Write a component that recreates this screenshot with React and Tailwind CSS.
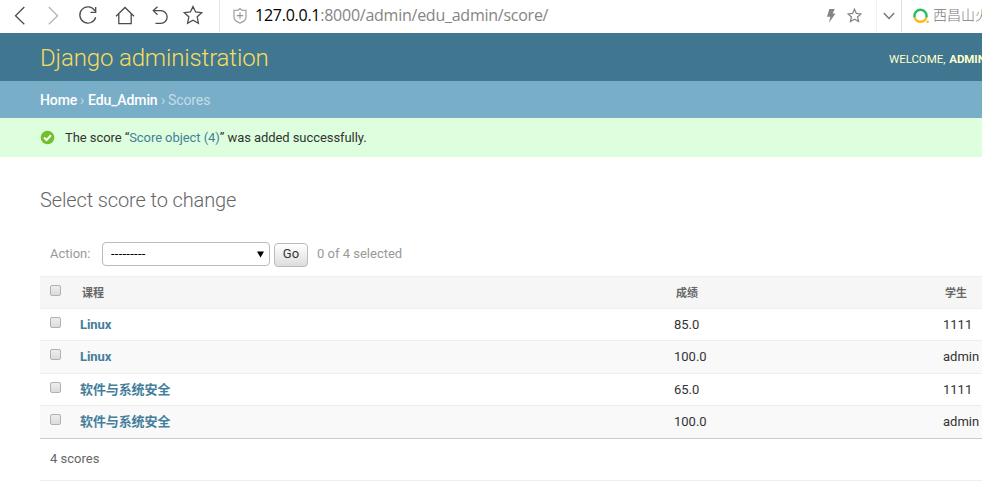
const rows = [
  { course: "Linux", score: "85.0", student: "1111", style: "h-[31px] bg-white" },
  { course: "Linux", score: "100.0", student: "admin", style: "h-[33px] bg-[#f9f9f9] border-t border-[#eee]" },
  { course: "软件与系统安全", score: "65.0", student: "1111", style: "h-8 bg-white border-t border-[#eee]" },
  { course: "软件与系统安全", score: "100.0", student: "admin", style: "h-[33px] bg-[#f9f9f9] border-t border-[#eee]" },
];

const stroke = { fill: "none", stroke: "#4c4c4c", strokeWidth: 1.3 };
const starPath = "M10 1.6 L12.5 7.2 L18.6 7.9 L14.1 12 L15.4 18 L10 14.9 L4.6 18 L5.9 12 L1.4 7.9 L7.5 7.2 Z";

function Toolbar() {
  return (
    <div className="flex h-[33px] items-center bg-white pb-[2px]">
      <div className="flex h-[33px] w-[220px] shrink-0 items-center border-r border-[#e4e4e4]">
        <svg width="219" height="32" viewBox="0 0 219 32" {...stroke}>
          <path d="M24.3 7 L15.5 15.7 L24.3 24.2" />
          <path d="M48.8 7 L57.6 15.7 L48.8 24.2" stroke="#b5b5b5" />
          <path d="M95 11 A8.1 8.1 0 1 0 95.7 17.2 M95.7 7 V12.3 H90.5" />
          <path d="M116 16.2 L125 7.5 L134 16.2 M118.8 14 V23.6 H131.2 V14" />
          <path d="M157.5 6.7 L153.3 10.6 L157.5 14.7 M153.5 10.6 H160.8 A6.3 6.3 0 0 1 160.8 23.3 H155.5" />
          <path d="M193 6.6 L195.6 12 L201.7 12.7 L197.2 16.8 L198.4 23.3 L193 20.2 L187.6 23.3 L188.8 16.8 L184.3 12.7 L190.4 12 Z" />
        </svg>
      </div>
      <svg className="ml-[13px] shrink-0" width="14" height="16" viewBox="0 0 14 16" fill="none" stroke="#959595" strokeWidth="1.1">
        <path d="M7 .8 L9 2.3 H13 V9.5 C13 12.5 10 13.8 7 15.2 C4 13.8 1 12.5 1 9.5 V2.3 H5 Z M3.8 7.6 H10.2 M7 4.4 V10.8" />
      </svg>
      <div className="ml-2 w-[560px] shrink-0 whitespace-nowrap pb-px font-['Open_Sans',sans-serif] text-[16px] leading-6 tracking-[-0.25px] text-[#858585]">
        <span className="text-black">127.0.0.1</span>:8000/admin/edu_admin/score/
      </div>
      <svg className="ml-[11px] shrink-0" width="10" height="14" viewBox="0 0 10 14" fill="#858585">
        <path d="M3.3 0 H8.7 L6.7 4.4 H9.5 L3 13.8 L4.3 7.8 H1 Z" />
      </svg>
      <svg className="ml-[11px] shrink-0" width="15" height="15" viewBox="0 0 20 20" fill="none" stroke="#858585" strokeWidth="1.7">
        <path d={starPath} />
      </svg>
      <div className="ml-[14px] flex h-[33px] w-[26px] shrink-0 items-center justify-center border-x border-l-[#f0f0f0] border-r-[#dde0e3]">
        <svg className="mt-px" width="12" height="8" viewBox="0 0 12 8" fill="none" stroke="#777" strokeWidth="1.5">
          <path d="M.8 1 L6 6.5 L11.2 1" />
        </svg>
      </div>
      <svg className="ml-[11px] shrink-0" width="17" height="16" viewBox="0 0 17 16" fill="none" strokeWidth="2.4">
        <path d="M1.8 9.6 A6 6 0 1 1 13.2 9.6" stroke="#28bd64" />
        <path d="M1.8 9.6 A6 6 0 0 0 13.2 9.6" stroke="#fdb923" />
        <circle cx="14.6" cy="13.7" r="1.3" fill="#fdb923" />
      </svg>
      <span className="ml-[3px] shrink-0 whitespace-nowrap pb-[3px] font-['Noto_Sans_CJK_SC',sans-serif] text-[14px] font-light leading-5 text-[#777]">西昌山火</span>
    </div>
  );
}

function Checkbox() {
  return <span className="block h-[11px] w-[11px] rounded-[2px] border border-[#b1b1b1] bg-linear-to-b from-[#ededed] to-[#dcdcdc]" />;
}

function ResultRow({ course, score, student, style }) {
  return (
    <div className={"flex text-[13px] leading-4 text-[#333] " + style}>
      <div className="w-10 shrink-0 pl-[10px] pt-2"><Checkbox /></div>
      <a className="w-[594px] shrink-0 pt-2 font-bold tracking-[-0.1px] text-[#447e9b]">{course}</a>
      <div className="w-[269px] shrink-0 pt-2">{score}</div>
      <div className="pt-2">{student}</div>
    </div>
  );
}

export default function App() {
  return (
    <div className="h-[488px] w-[982px] overflow-hidden bg-white font-['Roboto','Noto_Sans_CJK_SC',sans-serif]">
      <Toolbar />
      <header className="flex h-12 items-center justify-between overflow-hidden bg-[#417690] pl-10">
        <h1 className="pt-[2px] text-[24px] font-light leading-7 tracking-[-0.14px] text-[#f5dd5d]">Django administration</h1>
        <div className="w-[93px] whitespace-nowrap pt-[3px] text-[11.5px] leading-4 tracking-[-0.05px] text-[#ffc]">WELCOME, <b className="ml-px">ADMIN</b></div>
      </header>
      <nav className="flex h-[37px] items-center bg-[#79aec8] pl-10 pt-px text-[14px] leading-4 tracking-[-0.1px] text-[#c4dce8]">
        <a className="w-10 font-medium text-white">Home</a>
        <span className="w-2">›</span>
        <a className="w-[73px] font-medium text-white">Edu_Admin</a>
        <span className="w-[7px]">›</span>
        <span>Scores</span>
      </nav>
      <div className="flex h-[39px] items-center bg-[#dfd] pl-10 text-[13px] leading-4 text-[#333]">
        <svg width="15" height="15" viewBox="0 0 15 15">
          <circle cx="7.5" cy="7.5" r="6.8" fill="#70bf2b" />
          <path d="M4 7.5 L6.5 10 L11 5.3" fill="none" stroke="#fff" strokeWidth="2" />
        </svg>
        <p className="ml-[10px] tracking-[-0.07px]">The score “<a className="text-[#447e9b]">Score object (4)</a>” was added successfully.</p>
      </div>
      <main className="pl-10">
        <h2 className="pt-[31px] text-[20px] font-light leading-6 tracking-[-0.12px] text-[#666]">Select score to change</h2>
        <div className="mt-[29px] flex h-[35px] items-start pl-[10px] text-[13px] leading-4 text-[#999]">
          <span className="w-[52px] pt-[5px]">Action:</span>
          <div className="mt-[1px] flex h-6 w-[168px] items-center justify-between rounded-[4px] border border-[#bbb] bg-white pl-2 pr-[5px] text-black">
            <span className="tracking-[0.25px]">---------</span>
            <svg width="7" height="7" viewBox="0 0 7 7"><path d="M0 .5 H7 L3.5 6.5 Z" /></svg>
          </div>
          <button className="ml-1 mt-[2px] h-6 w-[34px] rounded-[4px] border border-[#bbb] bg-linear-to-b from-white to-[#ddd] pb-[2px] text-[13px] leading-4 text-[#333]">Go</button>
          <span className="ml-[9px] pt-[5px]">0 of 4 selected</span>
        </div>
        <div className="flex h-[33px] border-y border-[#eee] bg-[#f6f6f6] text-[11px] font-bold leading-4 text-[#666]">
          <div className="w-[42px] shrink-0 pl-[10px] pt-2"><Checkbox /></div>
          <span className="w-[594px] shrink-0 pt-[9px]">课程</span>
          <span className="w-[269px] shrink-0 pt-[9px]">成绩</span>
          <span className="shrink-0 pt-[9px]">学生</span>
        </div>
        {rows.map((row, i) => <ResultRow key={i} {...row} />)}
        <div className="h-[43px] border-y border-b-[#eee] border-t-[#ccc] pl-[10px] pt-3 text-[13px] leading-4 text-[#666]">4 scores</div>
      </main>
    </div>
  );
}
